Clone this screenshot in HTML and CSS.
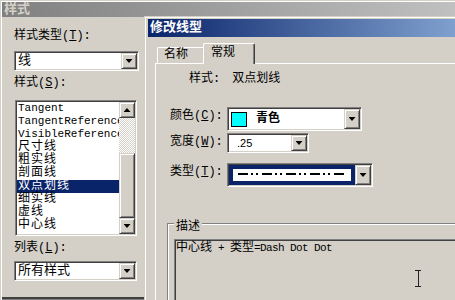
FILE: index.html
```html
<!DOCTYPE html>
<html lang="zh-CN">

<head>
    <meta charset="UTF-8">
    <title>样式 - 修改线型</title>
    <link rel="stylesheet" href="styles.css">
</head>

<body>
    <div class="desk">
        <!-- 左边的样式窗口 -->
        <div class="winLeft">
            <div class="captionGray">样式</div>
            <div class="leftBody">
                <div class="label">样式类型(<u>T</u>):</div>
                <div class="combo comboKind">
                    <span class="comboText">线</span>
                    <span class="drop"><i class="arrow"></i></span>
                </div>
                <div class="label">样式(<u>S</u>):</div>
                <div class="listbox">
                    <ul class="items">
                        <li class="en">Tangent</li>
                        <li class="en">TangentReference</li>
                        <li class="en">VisibleReference</li>
                        <li>尺寸线</li>
                        <li>粗实线</li>
                        <li>剖面线</li>
                        <li class="current">双点划线</li>
                        <li>细实线</li>
                        <li>虚线</li>
                        <li>中心线</li>
                    </ul>
                    <div class="vscroll">
                        <span class="sbtn"><i class="arrow up"></i></span>
                        <span class="track"></span>
                        <span class="thumb"></span>
                        <span class="sbtn"><i class="arrow"></i></span>
                    </div>
                </div>
                <div class="label">列表(<u>L</u>):</div>
                <div class="combo comboList">
                    <span class="comboText">所有样式</span>
                    <span class="drop"><i class="arrow"></i></span>
                </div>
                <div class="bottomEdge"></div>
            </div>
        </div>

        <!-- 右边的修改线型对话框 -->
        <div class="winRight">
            <div class="captionBlue">修改线型</div>
            <div class="tabs">
                <span class="tab">名称</span>
                <span class="tab active">常规</span>
            </div>
            <div class="panel">
                <div class="styleName">样式:<span>双点划线</span></div>

                <div class="field fColor">
                    <label>颜色(<u>C</u>):</label>
                    <div class="combo cColor">
                        <span class="swatch"></span>
                        <b class="colorName">青色</b>
                        <span class="drop"><i class="arrow"></i></span>
                    </div>
                </div>

                <div class="field fWidth">
                    <label>宽度(<u>W</u>):</label>
                    <div class="combo cWidth">
                        <span class="num">.25</span>
                        <span class="drop"><i class="arrow"></i></span>
                    </div>
                </div>

                <div class="field fType">
                    <label>类型(<u>T</u>):</label>
                    <div class="combo cType">
                        <span class="lineSel">
                            <span class="lineBox">
                                <svg width="116" height="12" viewBox="0 0 116 12" shape-rendering="crispEdges">
                                    <line x1="5" y1="5" x2="111" y2="5" stroke="#000" stroke-width="2"
                                        stroke-dasharray="10 3 2 3 2 4" />
                                </svg>
                            </span>
                        </span>
                        <span class="drop"><i class="arrow"></i></span>
                    </div>
                </div>

                <div class="group">
                    <span class="groupTitle">描述</span>
                    <div class="memo">中心线<span class="en"> + </span>类型<span class="en">=Dash Dot Dot</span></div>
                </div>
            </div>
        </div>

        <!-- 鼠标的文本光标 -->
        <svg class="ibeam" width="8" height="17" viewBox="0 0 8 17" shape-rendering="crispEdges">
            <path d="M1 0.5H7M4 0.5V16.5M1 16.5H7" stroke="#222" stroke-width="1" fill="none" />
        </svg>
    </div>
</body>

</html>
```

FILE: styles.css
```css
* {
    margin: 0;
    padding: 0;
    box-sizing: border-box;
}

li {
    list-style-type: none;
}

body {
    background-color: #d4d0c8;
    color: #000;
    font: 12px/14px "Liberation Mono", "Noto Sans CJK SC", monospace;
    overflow: hidden;
}

.desk {
    position: relative;
    width: 455px;
    height: 300px;
    overflow: hidden;
}

/* 左边窗口 */
.winLeft {
    margin: 1px 0 0 1px;
    height: 299px;
    border-top: 1px solid #fff;
    border-left: 1px solid #fff;
}

.captionGray {
    height: 15px;
    padding-left: 2px;
    background: linear-gradient(to right, #808080, #c0c0c0);
    color: #d4d0c8;
    font-weight: bold;
    font-size: 13px;
    line-height: 15px;
}

.leftBody {
    padding: 12px 0 0 12px;
}

.label {
    height: 14px;
}

/* 下拉框 */
.combo {
    display: flex;
    align-items: center;
    background-color: #fff;
    border: 1px solid;
    border-color: #808080 #fff #fff #808080;
    box-shadow: inset 1px 1px #404040, inset -1px -1px #d4d0c8;
    padding: 1px;
}

.comboText {
    flex: 1;
    padding-left: 2px;
    font-size: 13px;
}

.drop {
    display: flex;
    align-items: center;
    justify-content: center;
    width: 16px;
    height: 100%;
    background-color: #d4d0c8;
    border: 1px solid;
    border-color: #d4d0c8 #404040 #404040 #d4d0c8;
    box-shadow: inset 1px 1px #fff, inset -1px -1px #808080;
}

.arrow {
    display: block;
    width: 7px;
    height: 4px;
    background-color: #000;
    clip-path: polygon(0 0, 100% 0, 50% 100%);
}

.arrow.up {
    clip-path: polygon(50% 0, 100% 100%, 0 100%);
}

.comboKind {
    width: 125px;
    height: 20px;
    margin-top: 8px;
    margin-bottom: 5px;
}

.comboList {
    width: 123px;
    height: 20px;
    margin-top: 6px;
}

/* 列表框 */
.listbox {
    display: flex;
    width: 122px;
    height: 136px;
    margin: 10px 0 5px 1px;
    background-color: #fff;
    border: 1px solid;
    border-color: #808080 #fff #fff #808080;
    box-shadow: inset 1px 1px #404040, inset -1px -1px #d4d0c8;
    padding: 1px;
}

.items {
    flex: 1;
    overflow: hidden;
    white-space: nowrap;
}

.items li {
    height: 13px;
    padding-left: 1px;
    font-size: 12px;
    line-height: 13px;
    letter-spacing: 1px;
}

.items li.en {
    font-size: 11px;
    letter-spacing: 0;
}

.items .current {
    background-color: #0a246a;
    color: #fff;
}

.vscroll {
    display: flex;
    flex-direction: column;
    width: 16px;
}

.sbtn {
    display: flex;
    align-items: center;
    justify-content: center;
    height: 16px;
    background-color: #d4d0c8;
    border: 1px solid;
    border-color: #d4d0c8 #404040 #404040 #d4d0c8;
    box-shadow: inset 1px 1px #fff, inset -1px -1px #808080;
}

.track {
    height: 35px;
    background: repeating-conic-gradient(#fff 0 25%, #d4d0c8 0 50%) 0 0 / 2px 2px;
}

.thumb {
    height: 65px;
    background-color: #d4d0c8;
    border: 1px solid;
    border-color: #d4d0c8 #404040 #404040 #d4d0c8;
    box-shadow: inset 1px 1px #fff, inset -1px -1px #808080;
}

.bottomEdge {
    width: 143px;
    height: 3px;
    margin: 16px 0 0 -12px;
    background-color: #404040;
    border-bottom: 1px solid #808080;
}

/* 右边对话框 */
.winRight {
    position: absolute;
    left: 144px;
    top: 16px;
    width: 420px;
    height: 300px;
    padding: 2px 0 0 3px;
    border: 1px solid #d4d0c8;
    box-shadow: inset 1px 1px #fff;
}

.captionBlue {
    width: 410px;
    height: 18px;
    padding-left: 2px;
    background: linear-gradient(to right, #0a246a, #a6caf0);
    color: #fff;
    font-weight: bold;
    font-size: 13px;
    line-height: 18px;
}

.tabs {
    display: flex;
    align-items: flex-end;
    height: 26px;
    padding-left: 9px;
}

.tab {
    width: 48px;
    height: 16px;
    padding-left: 6px;
    border: 1px solid #fff;
    border-bottom: 0;
    border-right-color: #404040;
    border-radius: 2px 2px 0 0;
    box-shadow: inset -1px 0 #808080;
    line-height: 14px;
}

.tab.active {
    position: relative;
    z-index: 1;
    width: 52px;
    height: 21px;
    margin: 0 0 -1px -2px;
    padding: 2px 0 0 7px;
    background-color: #d4d0c8;
}

.panel {
    height: 300px;
    margin-left: 7px;
    padding-top: 8px;
    border-top: 1px solid #fff;
    border-left: 1px solid #fff;
}

.styleName {
    padding-left: 33px;
}

.styleName span {
    margin-left: 12px;
}

.field {
    display: flex;
    align-items: flex-start;
    padding-left: 14px;
}

.field label {
    width: 57px;
    padding-top: 2px;
}

.fColor {
    margin-top: 21px;
}

.fWidth {
    margin-top: 2px;
}

.fType {
    margin-top: 10px;
}

.cColor {
    width: 135px;
    height: 24px;
}

.swatch {
    width: 16px;
    height: 15px;
    margin-left: 2px;
    background-color: #00ffff;
    border: 1px solid #000;
}

.colorName {
    flex: 1;
    margin-left: 9px;
    font-size: 12px;
}

.cWidth {
    width: 82px;
    height: 20px;
}

.num {
    flex: 1;
    padding-left: 8px;
    font: 11px "Liberation Sans", Arial, sans-serif;
}

.cType {
    width: 146px;
    height: 24px;
}

.lineSel {
    flex: 1;
    height: 100%;
    padding: 4px;
    background-color: #0a246a;
}

.lineBox {
    display: block;
    height: 12px;
    background-color: #fff;
}

.lineBox svg {
    display: block;
}

/* 描述分组框 */
.group {
    width: 400px;
    height: 120px;
    margin: 36px 0 0 11px;
    border: 1px solid #808080;
    box-shadow: inset 1px 1px #fff, 1px 1px #fff;
}

.groupTitle {
    display: table;
    margin: -4px 0 0 6px;
    padding: 0 2px;
    background-color: #d4d0c8;
}

.memo {
    height: 100px;
    margin: 5px 0 0 6px;
    padding: 1px;
    border: 1px solid;
    border-color: #808080 #fff #fff #808080;
    box-shadow: inset 1px 1px #404040;
}

.memo .en {
    font-size: 11px;
    letter-spacing: -0.6px;
}

.ibeam {
    position: absolute;
    left: 414px;
    top: 270px;
}
```
